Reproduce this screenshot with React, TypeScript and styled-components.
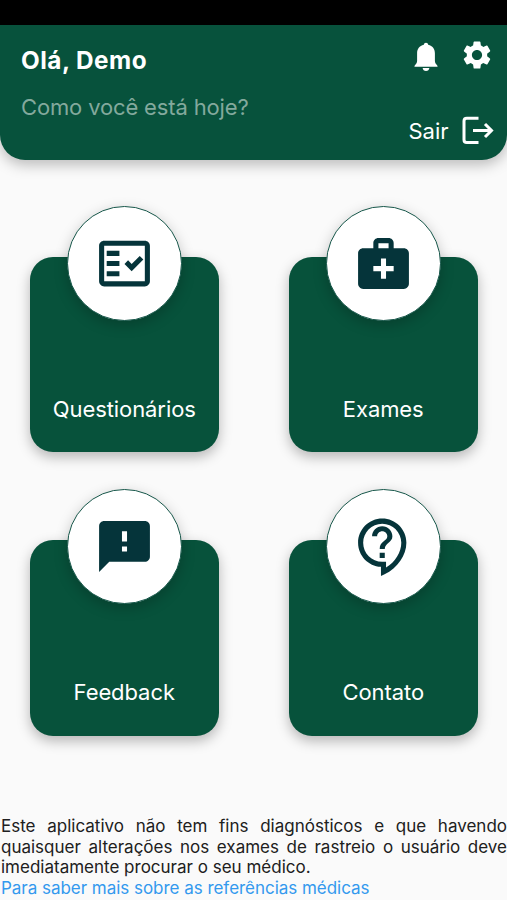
import React from "react";
import styled, { createGlobalStyle } from "styled-components";
import {
  MdOutlineFactCheck,
  MdMedicalServices,
  MdFeedback,
  MdOutlineContactSupport,
  MdSettings,
} from "react-icons/md";

const GlobalStyle = createGlobalStyle`
  * { box-sizing: border-box; }
  body { margin: 0; background: #fafafa; font-family: Inter, "Liberation Sans", sans-serif; }
  button { font: inherit; border: 0; padding: 0; background: none; color: inherit; }
`;

const Screen = styled.div`
  display: flex;
  flex-direction: column;
  height: 900px;
  overflow: hidden;
  background: #fafafa;
`;

const StatusBar = styled.div`
  height: 25px;
  flex: none;
  background: #000;
`;

const Header = styled.header`
  display: flex;
  justify-content: space-between;
  flex: none;
  height: 134.5px;
  padding: 0 13.5px 0 21px;
  border-radius: 0 0 25px 25px;
  background: #07523c;
  color: #fff;
  box-shadow: 0 5px 14px rgba(0, 0, 0, 0.25);
`;

const Greeting = styled.div`
  display: flex;
  flex-direction: column;
  gap: 18px;
  padding-top: 20px;
`;

const Title = styled.h1`
  margin: 0;
  font-size: 24.3px;
  line-height: 30px;
  font-weight: 700;
  letter-spacing: 0.5px;
  white-space: nowrap;
`;

const Subtitle = styled.p`
  margin: 0;
  font-size: 22px;
  line-height: 28px;
  letter-spacing: -0.15px;
  color: #83a99d;
  white-space: nowrap;
`;

const Actions = styled.div`
  display: flex;
  flex-direction: column;
  align-items: flex-end;
  justify-content: space-between;
  padding: 13px 0 14px;
`;

const IconActions = styled.div`
  display: flex;
  align-items: flex-end;
  gap: 22px;
`;

const IconButton = styled.button`
  display: flex;
  align-items: center;
`;

const Logout = styled.button`
  display: flex;
  align-items: center;
  gap: 13px;
  font-size: 22px;
  line-height: 30px;
`;

const Menu = styled.main`
  display: grid;
  grid-template-columns: 189.5px 189.5px;
  column-gap: 69.5px;
  row-gap: 37px;
  padding: 46px 0 0 29.5px;
`;

const MenuItem = styled.button`
  display: flex;
  flex-direction: column;
  align-items: center;
  height: 246.5px;
`;

const Disc = styled.span`
  display: flex;
  align-items: center;
  justify-content: center;
  flex: none;
  width: 115px;
  height: 115px;
  margin-bottom: -64px;
  border: 1.2px solid #17574a;
  border-radius: 50%;
  background: #fff;
  color: #05343a;
  box-shadow: 0 4px 14px rgba(0, 0, 0, 0.22);
  z-index: 1;
`;

const Card = styled.span`
  display: flex;
  align-items: flex-end;
  justify-content: center;
  flex: 1;
  align-self: stretch;
  padding-bottom: 28.5px;
  border-radius: 23px;
  background: #07523b;
  color: #fff;
  font-size: 22px;
  line-height: 30px;
  letter-spacing: -0.08px;
  box-shadow: 0 5px 13px rgba(0, 0, 0, 0.28);
`;

const Notice = styled.footer`
  margin-top: auto;
  padding: 0 0 1px 1px;
  font-size: 17px;
  line-height: 20.8px;
  color: #202020;
`;

const Disclaimer = styled.p`
  margin: 0;
  text-align: justify;
`;

const Reference = styled.a`
  display: block;
  color: #3399ee;
  letter-spacing: -0.03px;
  white-space: nowrap;
`;

const BellIcon = () => (
  <svg width="24" height="30" viewBox="0 0 24 30" fill="currentColor" aria-hidden="true">
    <path d="M12 .8c-1.3 0-2 .9-2.200 2C5.400 3.800 3.100 7 3.100 11.300v7.400c0 1.800-.7 2.900-1.800 4.100-.6.700-.9 1.100-.9 1.900h23.200c0-.8-.3-1.200-.9-1.900-1.100-1.200-1.800-2.300-1.800-4.100v-7.400c0-4.300-2.300-7.500-6.700-8.500-.2-1.100-.9-2-2.200-2z" />
    <path d="M8.600 26h6.800c-.3 1.900-1.500 3-3.400 3s-3.100-1.100-3.400-3z" />
  </svg>
);

const LogoutIcon = () => (
  <svg width="32" height="30" viewBox="0 0 32 30" fill="none" stroke="currentColor" strokeWidth="3" aria-hidden="true">
    <path d="M16.500 2.300H4.800Q2 2.300 2 5.100v18.700q0 2.800 2.800 2.800h11.700" />
    <path d="M11 14.500h18.500M23 8l6.500 6.500-6.500 6.500" />
  </svg>
);

const items = [
  { label: "Questionários", Icon: MdOutlineFactCheck },
  { label: "Exames", Icon: MdMedicalServices },
  { label: "Feedback", Icon: MdFeedback },
  { label: "Contato", Icon: MdOutlineContactSupport },
];

export default function App() {
  return (
    <>
      <GlobalStyle />
      <Screen>
        <StatusBar />
        <Header>
          <Greeting>
            <Title>Olá, Demo</Title>
            <Subtitle>Como você está hoje?</Subtitle>
          </Greeting>
          <Actions>
            <IconActions>
              <IconButton aria-label="Notificações"><BellIcon /></IconButton>
              <IconButton aria-label="Configurações"><MdSettings size={34} /></IconButton>
            </IconActions>
            <Logout>
              <span>Sair</span>
              <LogoutIcon />
            </Logout>
          </Actions>
        </Header>
        <Menu>
          {items.map(({ label, Icon }) => (
            <MenuItem key={label}>
              <Disc><Icon size={61} /></Disc>
              <Card>{label}</Card>
            </MenuItem>
          ))}
        </Menu>
        <Notice>
          <Disclaimer>
            Este aplicativo não tem fins diagnósticos e que havendo quaisquer alterações nos exames de rastreio o usuário deve imediatamente procurar o seu médico.
          </Disclaimer>
          <Reference>Para saber mais sobre as referências médicas</Reference>
        </Notice>
      </Screen>
    </>
  );
}
